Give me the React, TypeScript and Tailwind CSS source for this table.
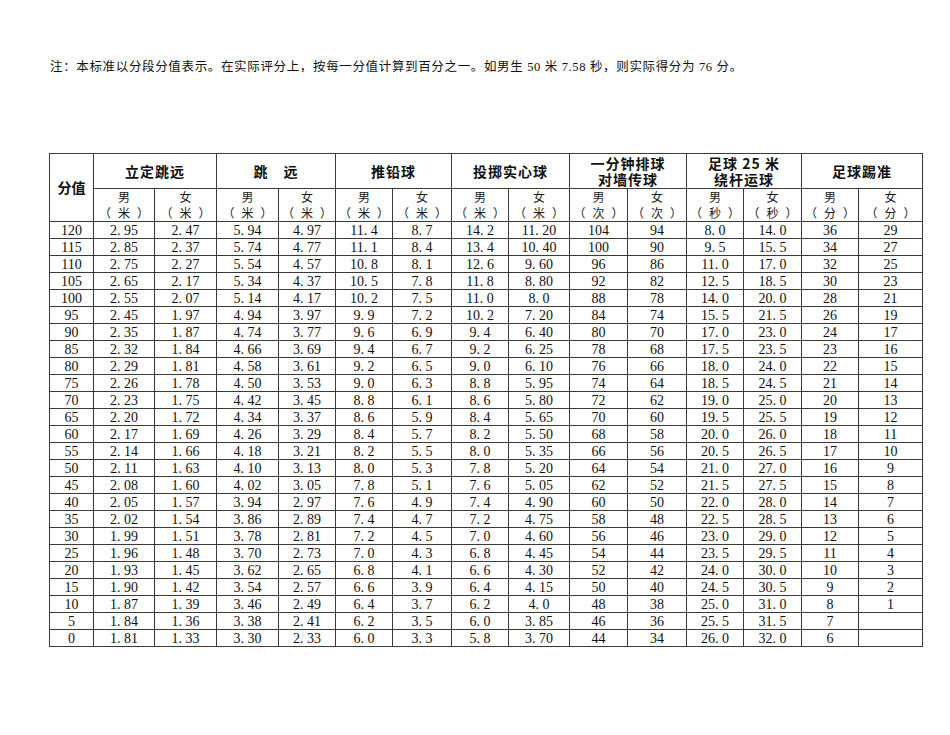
import React from "react";

const rows: (string | number)[][] = [
  [120, "2.95", "2.47", "5.94", "4.97", "11.4", "8.7", "14.2", "11.20", 104, 94, "8.0", "14.0", 36, 29],
  [115, "2.85", "2.37", "5.74", "4.77", "11.1", "8.4", "13.4", "10.40", 100, 90, "9.5", "15.5", 34, 27],
  [110, "2.75", "2.27", "5.54", "4.57", "10.8", "8.1", "12.6", "9.60", 96, 86, "11.0", "17.0", 32, 25],
  [105, "2.65", "2.17", "5.34", "4.37", "10.5", "7.8", "11.8", "8.80", 92, 82, "12.5", "18.5", 30, 23],
  [100, "2.55", "2.07", "5.14", "4.17", "10.2", "7.5", "11.0", "8.0", 88, 78, "14.0", "20.0", 28, 21],
  [95, "2.45", "1.97", "4.94", "3.97", "9.9", "7.2", "10.2", "7.20", 84, 74, "15.5", "21.5", 26, 19],
  [90, "2.35", "1.87", "4.74", "3.77", "9.6", "6.9", "9.4", "6.40", 80, 70, "17.0", "23.0", 24, 17],
  [85, "2.32", "1.84", "4.66", "3.69", "9.4", "6.7", "9.2", "6.25", 78, 68, "17.5", "23.5", 23, 16],
  [80, "2.29", "1.81", "4.58", "3.61", "9.2", "6.5", "9.0", "6.10", 76, 66, "18.0", "24.0", 22, 15],
  [75, "2.26", "1.78", "4.50", "3.53", "9.0", "6.3", "8.8", "5.95", 74, 64, "18.5", "24.5", 21, 14],
  [70, "2.23", "1.75", "4.42", "3.45", "8.8", "6.1", "8.6", "5.80", 72, 62, "19.0", "25.0", 20, 13],
  [65, "2.20", "1.72", "4.34", "3.37", "8.6", "5.9", "8.4", "5.65", 70, 60, "19.5", "25.5", 19, 12],
  [60, "2.17", "1.69", "4.26", "3.29", "8.4", "5.7", "8.2", "5.50", 68, 58, "20.0", "26.0", 18, 11],
  [55, "2.14", "1.66", "4.18", "3.21", "8.2", "5.5", "8.0", "5.35", 66, 56, "20.5", "26.5", 17, 10],
  [50, "2.11", "1.63", "4.10", "3.13", "8.0", "5.3", "7.8", "5.20", 64, 54, "21.0", "27.0", 16, 9],
  [45, "2.08", "1.60", "4.02", "3.05", "7.8", "5.1", "7.6", "5.05", 62, 52, "21.5", "27.5", 15, 8],
  [40, "2.05", "1.57", "3.94", "2.97", "7.6", "4.9", "7.4", "4.90", 60, 50, "22.0", "28.0", 14, 7],
  [35, "2.02", "1.54", "3.86", "2.89", "7.4", "4.7", "7.2", "4.75", 58, 48, "22.5", "28.5", 13, 6],
  [30, "1.99", "1.51", "3.78", "2.81", "7.2", "4.5", "7.0", "4.60", 56, 46, "23.0", "29.0", 12, 5],
  [25, "1.96", "1.48", "3.70", "2.73", "7.0", "4.3", "6.8", "4.45", 54, 44, "23.5", "29.5", 11, 4],
  [20, "1.93", "1.45", "3.62", "2.65", "6.8", "4.1", "6.6", "4.30", 52, 42, "24.0", "30.0", 10, 3],
  [15, "1.90", "1.42", "3.54", "2.57", "6.6", "3.9", "6.4", "4.15", 50, 40, "24.5", "30.5", 9, 2],
  [10, "1.87", "1.39", "3.46", "2.49", "6.4", "3.7", "6.2", "4.0", 48, 38, "25.0", "31.0", 8, 1],
  [5, "1.84", "1.36", "3.38", "2.41", "6.2", "3.5", "6.0", "3.85", 46, 36, "25.5", "31.5", 7, ""],
  [0, "1.81", "1.33", "3.30", "2.33", "6.0", "3.3", "5.8", "3.70", 44, 34, "26.0", "32.0", 6, ""],
];

// 列宽按原表量出来的
const widths = [44, 61, 62, 62, 57, 57, 59, 57, 61, 58, 59, 57, 58, 57, 64];

const groups = [
  { name: "立定跳远", unit: "米" },
  { name: "跳　远", unit: "米" },
  { name: "推铅球", unit: "米" },
  { name: "投掷实心球", unit: "米" },
  { name: "一分钟排球\n对墙传球", unit: "次" },
  { name: "足球 25 米\n绕杆运球", unit: "秒" },
  { name: "足球踢准", unit: "分" },
];

const cell = "border border-[#3a3a3a] text-center p-0";
const cjk = { fontFamily: '"Noto Sans CJK SC", sans-serif' };

function Num({ v }: { v: string | number }) {
  const s = String(v);
  if (!s.includes(".")) return <>{s}</>;
  const [a, b] = s.split(".");
  return (
    <>
      {a}
      <span className="inline-block w-[7px] text-left">.</span>
      {b}
    </>
  );
}

export default function App() {
  return (
    <div
      className="min-h-screen bg-white text-[#111] pl-[49px] pt-[60px]"
      style={{ fontFamily: '"Liberation Serif", "Noto Sans CJK SC", serif' }}
    >
      <p className="text-[12.5px] leading-[14px] ml-px tracking-[0.65px]">
        注：本标准以分段分值表示。在实际评分上，按每一分值计算到百分之一。如男生 50 米 7.58 秒，则实际得分为 76 分。
      </p>

      <table className="mt-[79px] border-collapse table-fixed w-[873px]">
        <colgroup>
          {widths.map((w, i) => (
            <col key={i} style={{ width: w }} />
          ))}
        </colgroup>
        <thead>
          <tr className="h-[35px]">
            <th rowSpan={2} className={`${cell} text-[14px] font-bold`} style={cjk}>
              分值
            </th>
            {groups.map((g) => (
              <th
                key={g.name}
                colSpan={2}
                className={`${cell} text-[14px] font-bold leading-[16px] whitespace-pre-line tracking-[1px]`}
                style={cjk}
              >
                {g.name}
              </th>
            ))}
          </tr>
          <tr className="h-[33px]">
            {groups.map((g) =>
              ["男", "女"].map((s) => (
                <th
                  key={g.name + s}
                  className={`${cell} font-normal text-[12px] leading-[16px] text-[#1a1a1a]`}
                  style={cjk}
                >
                  <div>{s}</div>
                  <div className="flex justify-between w-[50px] mx-auto">
                    <span>（</span>
                    <span>{g.unit}</span>
                    <span>）</span>
                  </div>
                </th>
              ))
            )}
          </tr>
        </thead>
        <tbody>
          {rows.map((r) => (
            <tr key={r[0]} className="h-[17px]">
              {r.map((v, i) => (
                <td key={i} className={`${cell} text-[14px] leading-[15px]`}>
                  <Num v={v} />
                </td>
              ))}
            </tr>
          ))}
        </tbody>
      </table>
    </div>
  );
}
